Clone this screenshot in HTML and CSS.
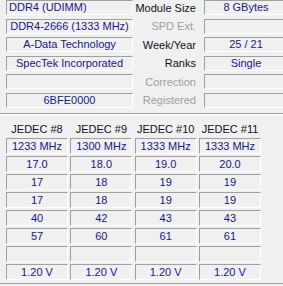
FILE: index.html
```html
<!DOCTYPE html>
<html lang="en">
<head>
  <meta charset="UTF-8">
  <title>SPD</title>
  <link rel="stylesheet" href="styles.css">
</head>
<body>

<div class="module">
  <div class="field left-text">DDR4 (UDIMM)</div>
  <div class="label">Module Size</div>
  <div class="field">8 GBytes</div>

  <div class="field">DDR4-2666 (1333 MHz)</div>
  <div class="label off">SPD Ext.</div>
  <div class="field"></div>

  <div class="field">A-Data Technology</div>
  <div class="label">Week/Year</div>
  <div class="field">25 / 21</div>

  <div class="field">SpecTek Incorporated</div>
  <div class="label">Ranks</div>
  <div class="field">Single</div>

  <div class="field"></div>
  <div class="label off">Correction</div>
  <div class="field"></div>

  <div class="field">6BFE0000</div>
  <div class="label off">Registered</div>
  <div class="field"></div>
</div>

<div class="group">
  <div class="timings">
    <div class="head">JEDEC #8</div>
    <div class="head">JEDEC #9</div>
    <div class="head">JEDEC #10</div>
    <div class="head">JEDEC #11</div>

    <div class="cell">1233 MHz</div>
    <div class="cell">1300 MHz</div>
    <div class="cell">1333 MHz</div>
    <div class="cell">1333 MHz</div>

    <div class="cell">17.0</div>
    <div class="cell">18.0</div>
    <div class="cell">19.0</div>
    <div class="cell">20.0</div>

    <div class="cell">17</div>
    <div class="cell">18</div>
    <div class="cell">19</div>
    <div class="cell">19</div>

    <div class="cell">17</div>
    <div class="cell">18</div>
    <div class="cell">19</div>
    <div class="cell">19</div>

    <div class="cell">40</div>
    <div class="cell">42</div>
    <div class="cell">43</div>
    <div class="cell">43</div>

    <div class="cell">57</div>
    <div class="cell">60</div>
    <div class="cell">61</div>
    <div class="cell">61</div>

    <div class="cell"></div>
    <div class="cell"></div>
    <div class="cell"></div>
    <div class="cell"></div>

    <div class="cell">1.20 V</div>
    <div class="cell">1.20 V</div>
    <div class="cell">1.20 V</div>
    <div class="cell">1.20 V</div>
  </div>
</div>

</body>
</html>
```

FILE: styles.css
```css
body {
  margin: 0;
  background-color: #f0f0f0;
  font-family: "Liberation Sans", Arial, sans-serif;
  font-size: 11px;
  color: #000;
  overflow: hidden;
}
.module {
  display: grid;
  grid-template-columns: 127px 63px 92px;
  grid-auto-rows: 15px;
  row-gap: 3.5px;
  padding-left: 6px;
}
.label {
  display: flex;
  justify-content: flex-end;
  align-items: center;
  white-space: nowrap;
  color: #101020;
}
.label.off {
  color: #a0a0a0;
}
.field, .cell {
  box-sizing: border-box;
  border-top: 1px solid #a0a0a0;
  border-left: 1px solid #a0a0a0;
  border-right: 1px solid #ffffff;
  border-bottom: 1px solid #ffffff;
  color: #1414a0;
  text-align: center;
  white-space: nowrap;
  overflow: hidden;
}
.field {
  line-height: 13px;
}
.field.left-text {
  text-align: left;
  padding-left: 2px;
}
.label + .field {
  margin-left: 8px;
}
.group {
  margin-top: 5.5px;
  border-top: 1px solid #a0a0a0;
  border-bottom: 1px solid #a0a0a0;
  box-shadow: inset 0 1px 0 #ffffff, 0 1px 0 #ffffff;
  padding: 8px 0 3px 6px;
}
.timings {
  display: grid;
  grid-template-columns: repeat(4, 62px);
  grid-template-rows: 14px;
  grid-auto-rows: 16px;
  column-gap: 2.34px;
  row-gap: 2px;
}
.head {
  text-align: center;
  line-height: 14px;
  color: #101020;
}
.cell {
  line-height: 14px;
}
```
